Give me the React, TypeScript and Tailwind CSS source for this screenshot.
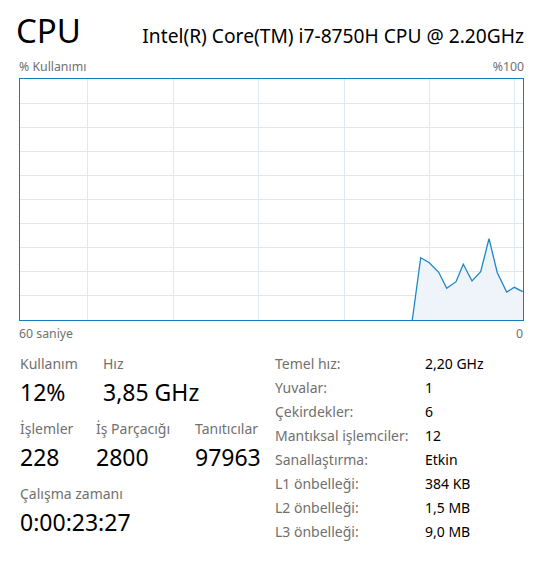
import React from "react";

const points: [number, number][] = [
  [393.3, 242],
  [401.7, 179.7],
  [410.3, 184.7],
  [419.7, 194.3],
  [427.7, 210.3],
  [437, 203.7],
  [444.3, 186.3],
  [453, 203],
  [461.7, 193.7],
  [470, 160.7],
  [478.3, 194.7],
  [487.7, 214],
  [495.3, 209.3],
  [503.7, 213.7],
];

const hLines = [25, 49, 73, 97, 121, 145, 169, 193, 217];
const vLines = [68, 154, 239, 325, 410, 495];

const UsageChart = () => {
  const line = points.map((p) => p.join(",")).join(" ");
  const area = `${line} 503.7,242 393.3,242`;
  return (
    <svg width="505" height="243" viewBox="0 0 505 243" className="block">
      {hLines.map((y) => (
        <line key={"h" + y} x1="0" x2="505" y1={y + 0.5} y2={y + 0.5} stroke="#d9eaf4" strokeWidth="1" />
      ))}
      {vLines.map((x) => (
        <line key={"v" + x} x1={x + 0.5} x2={x + 0.5} y1="0" y2="243" stroke="#d9eaf4" strokeWidth="1" />
      ))}
      <polygon points={area} fill="#eef4f9" />
      <polyline points={line} fill="none" stroke="#1b87c9" strokeWidth="1.3" strokeLinejoin="miter" />
      <rect x="0.5" y="0.5" width="504" height="242" fill="none" stroke="#117dbb" strokeWidth="1" />
    </svg>
  );
};

const Stat = ({ label, value, className = "" }: { label: string; value: string; className?: string }) => (
  <div className={className}>
    <div className="text-[14px] leading-[20px] text-[#707070]">{label}</div>
    <div className="text-[23px] leading-[36px] text-black">{value}</div>
  </div>
);

const specs: [string, string][] = [
  ["Temel hız:", "2,20 GHz"],
  ["Yuvalar:", "1"],
  ["Çekirdekler:", "6"],
  ["Mantıksal işlemciler:", "12"],
  ["Sanallaştırma:", "Etkin"],
  ["L1 önbelleği:", "384 KB"],
  ["L2 önbelleği:", "1,5 MB"],
  ["L3 önbelleği:", "9,0 MB"],
];

export default function App() {
  return (
    <div
      className="w-[545px] h-[577px] bg-white overflow-hidden"
      style={{ fontFamily: '"Noto Sans", "Open Sans", sans-serif' }}
    >
      <div className="flex items-end justify-between pl-[16px] pr-[21px] pt-[6px] h-[52px]">
        <div className="text-[33px] leading-[42px] text-black">CPU</div>
        <div className="text-[19.2px] leading-[28px] text-black pb-[2px]">Intel(R) Core(TM) i7-8750H CPU @ 2.20GHz</div>
      </div>

      <div className="ml-[19px] w-[505px]">
        <div className="flex justify-between pt-[3px] text-[12.3px] leading-[23px] text-[#707070]">
          <span>% Kullanımı</span>
          <span>%100</span>
        </div>
        <UsageChart />
        <div className="flex justify-between text-[12.3px] leading-[26px] text-[#707070]">
          <span>60 saniye</span>
          <span className="pr-[1px]">0</span>
        </div>
      </div>

      <div className="flex pl-[20px] pt-[5px]">
        <div className="w-[255px] pt-[2px]">
          <div className="flex">
            <Stat label="Kullanım" value="12%" className="w-[83px]" />
            <Stat label="Hız" value="3,85 GHz" />
          </div>
          <div className="flex mt-[9px]">
            <Stat label="İşlemler" value="228" className="w-[76px]" />
            <Stat label="İş Parçacığı" value="2800" className="w-[99px]" />
            <Stat label="Tanıtıcılar" value="97963" />
          </div>
          <Stat label="Çalışma zamanı" value="0:00:23:27" className="mt-[9px]" />
        </div>
        <div className="grid grid-cols-[150px_auto] text-[14px] leading-[24px]">
          {specs.map(([k, v]) => (
            <React.Fragment key={k}>
              <div className="text-[#707070]">{k}</div>
              <div className="text-black">{v}</div>
            </React.Fragment>
          ))}
        </div>
      </div>
    </div>
  );
}
